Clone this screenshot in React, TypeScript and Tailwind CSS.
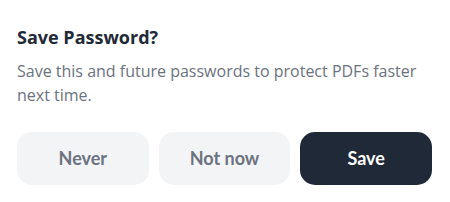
export default function App() {
  return (
    <div className="w-[450px] h-[202px] bg-white px-[17px] pt-[25px]">
      <h2 className="text-[18px] leading-[24px] font-bold text-[#1f2937] font-['Open_Sans',sans-serif]">
        Save Password?
      </h2>
      <p className="mt-[10px] text-[16px] leading-[24px] text-[#6b7280] font-['Open_Sans',sans-serif]">
        Save this and future passwords to protect PDFs faster next time.
      </p>
      <div className="mt-[25px] grid grid-cols-3 gap-[10px] pr-[1px] font-['Lato',sans-serif]">
        <button className="h-[53px] rounded-[15px] bg-[#f3f4f6] text-[18px] font-bold text-[#6b7280]">
          Never
        </button>
        <button className="h-[53px] rounded-[15px] bg-[#f3f4f6] text-[18px] font-bold text-[#6b7280]">
          Not now
        </button>
        <button className="h-[53px] rounded-[15px] bg-[#1f2937] text-[18px] font-bold text-white">
          Save
        </button>
      </div>
    </div>
  );
}
